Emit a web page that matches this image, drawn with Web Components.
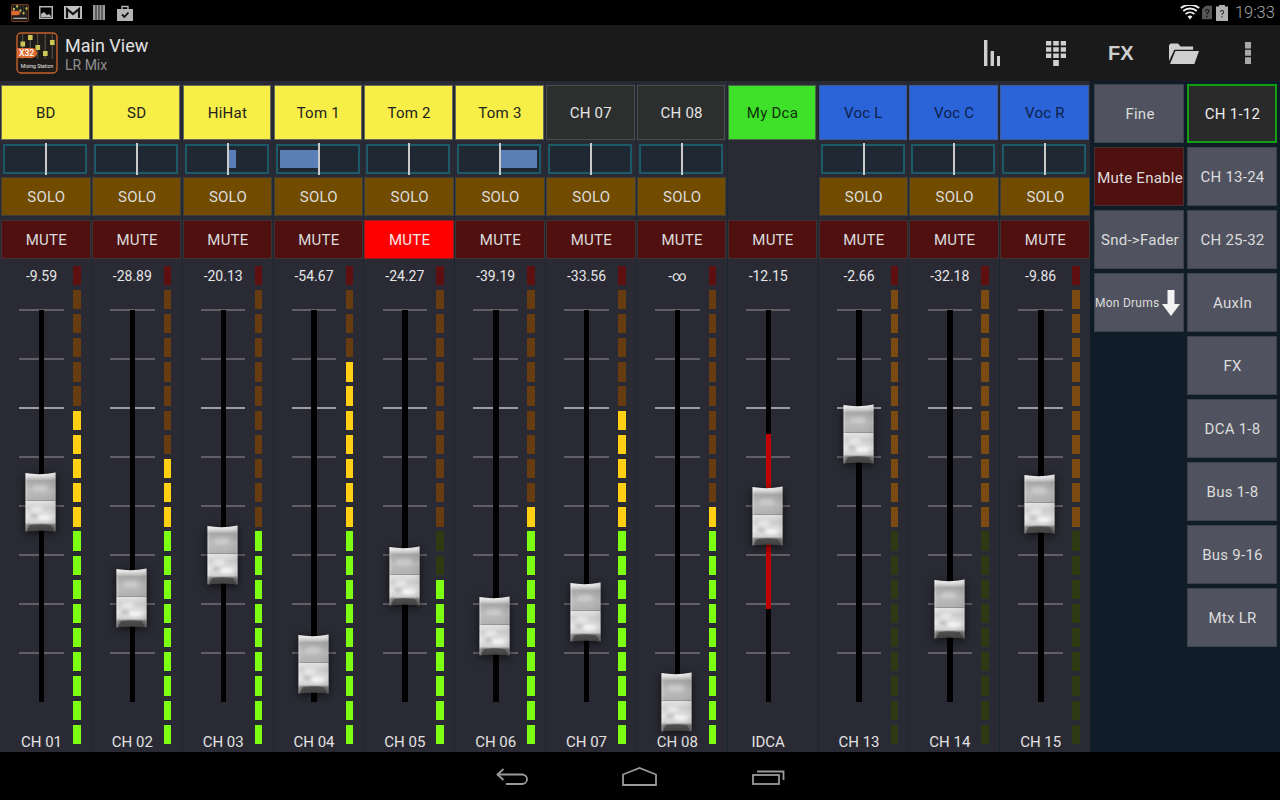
<!DOCTYPE html>
<html lang="en">
<head>
<meta charset="utf-8">
<title>Mixing Station</title>
<style>
html,body{margin:0;padding:0;background:#000;height:800px;overflow:hidden;font-family:Roboto,"Liberation Sans",sans-serif}
</style>
</head>
<body>
<x-app></x-app>
<script>
function def(name, css, html, init){
  customElements.define(name, class extends HTMLElement{
    connectedCallback(){
      if(this.shadowRoot) return;
      const r=this.attachShadow({mode:'open'});
      const h=typeof html==='function'?html(this):html;
      r.innerHTML='<style>'+css+'</style>'+h;
      if(init) init(this,r);
    }
  });
}
const A=(el,k,d)=>el.hasAttribute(k)?el.getAttribute(k):d;

/* logo */
def('x-logo',':host{display:block;line-height:0}svg{display:block;width:100%;height:100%}text{font-family:Roboto,"Liberation Sans",sans-serif}',el=>{
  const mini=el.hasAttribute('mini');
  const knobs=[[4.5,9.5],[12,3],[19.5,13],[27,19],[34,8]];
  return `<svg viewBox="0 0 42 42">
  <rect x="1" y="1" width="40" height="40" rx="4" fill="#1f1b18" stroke="#c4622d" stroke-width="1.4"/>
  ${[6.7,14.2,21.7,29.2,36.2].map(x=>`<rect x="${x-.5}" y="2" width="1" height="25" fill="#5c5a50"/>`).join('')}
  ${knobs.map(k=>`<rect x="${k[0]}" y="${k[1]}" width="4.6" height="5" fill="#cfc755"/>`).join('')}
  <path d="M1 16H16a5 5 0 0 1 0 10H1Z" fill="#dd6a30"/>
  ${mini?'<rect x="5" y="32" width="32" height="3" fill="#aaa"/>':`<text x="3" y="24.2" font-size="8.6" font-weight="500" fill="#fff">X32</text>
  <text x="21" y="36" text-anchor="middle" font-size="5.1" fill="#e8e8e8">Mixing Station</text>`}
  </svg>`;
});

/* status bar */
def('x-status-bar',`:host{display:flex;align-items:center;height:25px;background:#000;flex:none;padding:0 6px 0 11px;box-sizing:border-box}
.l{display:flex;align-items:center;gap:10px;flex:1}
.r{display:flex;align-items:center}
svg{display:block}
x-logo{width:18px;height:18px}
.t{color:#a8a8a8;font:300 16.4px Roboto,sans-serif;margin-left:7px;width:39px;white-space:nowrap}`,
`<div class="l">
<x-logo mini></x-logo>
<svg width="14" height="13" viewBox="0 0 14 13"><rect x=".75" y=".75" width="12.5" height="11.5" fill="none" stroke="#b5b5b5" stroke-width="1.5"/><path d="M2 11V8l3-2 3 3 2-1 2 2v1Z" fill="#b5b5b5"/></svg>
<svg width="18" height="13" viewBox="0 0 18 13" style="margin-left:1px"><rect width="18" height="13" fill="#c0c0c0"/><path d="M3 12V3l6 5 6-5v9" fill="none" stroke="#111" stroke-width="2.2"/></svg>
<svg width="12" height="15" viewBox="0 0 12 15" style="margin-left:1px"><rect width="12" height="15" fill="#9a9a9a"/><path d="M3 0v15M6 0v15M9 0v15" stroke="#222" stroke-width="1"/></svg>
<svg width="16" height="16" viewBox="0 0 16 16" style="margin-left:2px"><path d="M5 4V1.5h6V4" fill="none" stroke="#b5b5b5" stroke-width="1.4"/><rect y="4" width="16" height="12" fill="#b5b5b5"/><path d="M5 9.5l2.4 2.4L11.5 7.5" fill="none" stroke="#111" stroke-width="1.8"/></svg>
</div>
<div class="r">
<svg width="20" height="15" viewBox="0 0 20 15"><path d="M10 14.5L7.6 11.4a4 4 0 0 1 4.8 0Z" fill="#eee"/><path d="M5.6 8.9a7 7 0 0 1 8.8 0M3.2 5.9a11 11 0 0 1 13.6 0M.8 3a15 15 0 0 1 18.4 0" fill="none" stroke="#eee" stroke-width="1.9"/></svg>
<svg width="10" height="15" viewBox="0 0 11 15" style="margin-left:2px"><path d="M4 0h7v15H0V4Z" fill="#565656"/><path d="M3.8 6a1.8 1.8 0 1 1 2.6 1.6c-.8.5-.9.9-.9 1.9M5.5 11v1.6" fill="none" stroke="#111" stroke-width="1.3"/></svg>
<svg width="12" height="16" viewBox="0 0 12 16" style="margin-left:4px"><path d="M3 0h6v1.5h3V16H0V1.5h3Z" fill="#b0b0b0"/><path d="M4.4 7a1.6 1.6 0 1 1 2.4 1.4c-.7.4-.8.8-.8 1.6M6 11v1.4" fill="none" stroke="#333" stroke-width="1.1"/></svg>
<span class="t">19:33</span>
</div>`);

/* action bar */
def('x-action-bar',`:host{display:flex;align-items:center;height:56px;background:#1a1a1a;flex:none;padding-left:16px;box-sizing:border-box;position:relative}
x-logo{width:42px;height:42px;margin-right:7px}
.tt{flex:1;display:flex;flex-direction:column;line-height:1;padding-top:3px}
.a{font:400 18px/20px Roboto,sans-serif;color:#e2e2e2}
.b{font:400 14px/16px Roboto,sans-serif;color:#8f8f8f;margin-top:1px}
.ic{display:flex;align-items:center;color:#cfcfcf;padding-right:29px}
svg{display:block}
.fx{font:700 20px "Liberation Sans",sans-serif;color:#cfcfcf;width:25px;margin-left:42px}`,
`<x-logo></x-logo>
<div class="tt"><div class="a">Main View</div><div class="b">LR Mix</div></div>
<div class="ic">
<svg width="16" height="26" viewBox="0 0 16 26"><path d="M0 0h3.4v26H0ZM6.6 11H10v15H6.6ZM13 16h3v10h-3Z" fill="#cfcfcf"/></svg>
<svg width="20" height="25" viewBox="0 0 20 25" style="margin-left:46px" fill="#cfcfcf"><path d="M0 0h5.3v4.6H0ZM7.2 0h5.6v4.6H7.2ZM14.7 0H20v4.6h-5.3ZM0 6.2h5.3v4.6H0ZM7.2 6.2h5.6v4.6H7.2ZM14.7 6.2H20v4.6h-5.3ZM0 12.4h5.3V17H0ZM7.2 12.4h5.6V17H7.2ZM14.7 12.4H20V17h-5.3ZM7.2 19h5.6v6H7.2Z"/></svg>
<span class="fx">FX</span>
<svg width="30" height="21" viewBox="0 0 30 21" style="margin-left:36px"><path d="M0 20.5V2.2L1.5.5h7.6l2.4 3h12.6v3.2H5.4L0 18Z" fill="#cfcfcf"/><path d="M1 21L6.4 8H30l-4.6 13Z" fill="#cfcfcf"/></svg>
<svg width="6" height="22" viewBox="0 0 6 22" style="margin-left:46px" fill="#a8a8a8"><path d="M0 0h6v6.6H0ZM0 7.8h6v6H0ZM0 15.3h6V22H0Z"/></svg>
</div>`);

/* generic button */
def('x-btn',`:host{display:flex;align-items:center;justify-content:center;box-sizing:border-box;padding-left:1px;border:1px solid var(--bd,#3c424c);background:var(--bg,#50535f);color:var(--fg,#dcdcdc);font:400 var(--fs,15px) Roboto,sans-serif;letter-spacing:.25px;white-space:nowrap;overflow:hidden;text-align:center}`,
`<slot></slot>`);

/* pan */
def('x-pan',`:host{display:block;height:30px;margin:0 3px 0 3px;position:relative;box-sizing:border-box;border:2px solid #1d5a68;background:#1f2833;width:84px}
.bar{position:absolute;top:4px;height:18px;background:#5a7fb6}
.c{position:absolute;left:40px;width:2px;top:-3px;bottom:-3px;background:#cacaca}`,
el=>{
  const p=+A(el,'pan',0);
  const w=Math.abs(p);
  const s=p<0?`left:${40-w}px;width:${w}px`:`left:40px;width:${w}px`;
  return (p?`<div class="bar" style="${s}"></div>`:'')+'<div class="c"></div>';
});

/* meter */
def('x-meter',`:host{display:flex;flex-direction:column;gap:4.86px;width:7.6px;padding-top:6.7px;flex:none}
i{display:block;height:19.3px;flex:none;background:var(--c)}`,
el=>{
  const lit=+A(el,'lit',20), off=el.hasAttribute('off');
  let o='';
  for(let i=0;i<20;i++){
    let c;
    if(i===0) c='#5e1010';
    else if(i<=10) c=i>=lit?'#ffd011':(off?'#7a4a10':'#673c10');
    else c=i>=lit?'#7cff10':'#2e3a12';
    o+=`<i style="--c:${c}"></i>`;
  }
  return o;
});

/* fader */
let capId=0;
def('x-fader',`:host{display:block;width:44.4px;height:392px;position:relative;flex:none}
.ticks{display:flex;flex-direction:column;margin-top:-1px}
.tk{height:49px;flex:none;box-sizing:border-box;border-top:2px solid #5f5f65}
.tk.h{border-top-color:#9c9ca0}
.track{position:absolute;left:19.7px;top:0;bottom:0;width:5.4px;background:#000}
.dca{position:absolute;left:0;right:0;background:#c00000}
svg{position:absolute;left:5.9px;width:31px;height:60px;filter:drop-shadow(0 2px 5px rgba(0,0,0,.65))}`,
el=>{
  const id='c'+(++capId);
  const top=+A(el,'cap',0)-1;
  const dca=el.hasAttribute('dca-top')?`<div class="dca" style="top:${A(el,'dca-top')}px;height:${A(el,'dca-h')}px"></div>`:'';
  let t='';
  for(let i=0;i<8;i++) t+=`<div class="tk${i===2?' h':''}"></div>`;
  const shape='M.5 1Q15.5 3.5 30.5 .5L30.5 59.5Q15.5 57.5 .5 59.5Z';
  return `<div class="ticks">${t}</div><div class="track">${dca}</div>
  <svg style="top:${top}px" viewBox="0 0 31 60">
  <defs>
    <linearGradient id="${id}a" x1="0" y1="0" x2="0" y2="1">
      <stop offset="0" stop-color="#f0f0f0"/><stop offset=".06" stop-color="#e0e0e0"/><stop offset=".14" stop-color="#a6a6a6"/><stop offset=".3" stop-color="#bcbcbc"/><stop offset=".46" stop-color="#b0b0b0"/>
      <stop offset=".47" stop-color="#7c7c7c"/><stop offset=".49" stop-color="#e2e2e2"/><stop offset=".6" stop-color="#cfcfcf"/><stop offset=".74" stop-color="#e4e4e4"/><stop offset=".85" stop-color="#cfcfcf"/><stop offset=".89" stop-color="#7a7a7a"/><stop offset="1" stop-color="#484848"/>
    </linearGradient>
    <linearGradient id="${id}b" x1="0" y1="0" x2="1" y2="0">
      <stop offset="0" stop-color="#fff" stop-opacity=".4"/><stop offset=".08" stop-color="#fff" stop-opacity=".03"/><stop offset=".5" stop-color="#fff" stop-opacity="0"/><stop offset=".92" stop-color="#000" stop-opacity=".05"/><stop offset="1" stop-color="#fff" stop-opacity=".25"/>
    </linearGradient>
    <filter id="${id}f" x="-30%" y="-30%" width="160%" height="160%"><feGaussianBlur stdDeviation="1.8"/></filter>
    <clipPath id="${id}p"><rect x="1" y="3" width="29" height="48"/></clipPath>
  </defs>
  <path d="${shape}" fill="url(#${id}a)"/>
  <g clip-path="url(#${id}p)">
    <ellipse cx="12" cy="37" rx="6" ry="3" fill="#fff" opacity=".45" filter="url(#${id}f)"/>
    <ellipse cx="20" cy="46" rx="7" ry="2.6" fill="#fff" opacity=".7" filter="url(#${id}f)"/>
    <ellipse cx="9" cy="44" rx="4" ry="2" fill="#999" opacity=".5" filter="url(#${id}f)"/>
    <ellipse cx="15" cy="16" rx="8" ry="3.6" fill="#ddd" opacity=".45" filter="url(#${id}f)"/>
  </g>
  <path d="${shape}" fill="url(#${id}b)"/>
  <path d="M5 53Q15.5 51.5 26 53L29 59.2Q15.5 57.5 2 59.2Z" fill="#3c3c3c" opacity=".7"/>
  </svg>`;
});

/* strip */
def('x-strip',`:host{display:flex;flex-direction:column;height:671px;box-sizing:border-box;padding-top:4px;min-width:0;
  background:linear-gradient(#1b2832,#1b2832) left top/1px 100% no-repeat,#2a2a34}
:host(:first-child){background:#2a2a34}
.btns{display:flex;flex-direction:column;height:174px;padding-left:1px;flex:none}
.nm{height:55px;width:88.6px}
x-btn.s{height:39px;width:89.6px;margin-top:3px;--bg:#704b00;--bd:#3e3e3c;--fg:#dcdcdc}
x-btn.m{height:39px;width:89.6px;margin-top:4px;--bg:#501010;--bd:#3e3234;--fg:#dcdcdc}
x-btn.m.on{--bg:#ff0000;--fg:#f0e8e8;--bd:#8a2020}
x-pan{margin-top:4px;margin-left:2px}
.sp{height:76px;flex:none}
.low{display:flex;flex:1;min-height:0}
.col{width:63px;margin-left:10px;flex:none;display:flex;flex-direction:column;align-items:center;position:relative}
.v{height:51px;flex:none;box-sizing:border-box;padding-top:7px;font:400 14px/20px Roboto,sans-serif;color:#e6e6e6;white-space:nowrap}
.lb{flex:none;margin-top:30px;font:400 15px/20px Roboto,sans-serif;color:#e2e2e2;white-space:nowrap}`,
el=>{
  const dca=el.hasAttribute('dca');
  const on=el.hasAttribute('muted');
  const style=`--bg:${A(el,'bg','#2c2f2e')};--fg:${A(el,'fg','#e4e4e4')};--bd:${A(el,'bd','#4a4d4c')}`;
  return `<div class="btns">
  <x-btn class="nm" style="${style}">${A(el,'name','')}</x-btn>
  ${dca?'<div class="sp"></div>':`<x-pan pan="${A(el,'pan',0)}"></x-pan><x-btn class="s">SOLO</x-btn>`}
  <x-btn class="m${on?' on':''}">MUTE</x-btn></div>
  <div class="low">
    <div class="col"><div class="v">${A(el,'value','')}</div>
      <x-fader cap="${A(el,'cap',0)}" ${dca?'dca-top="124" dca-h="175"':''}></x-fader>
      <div class="lb">${A(el,'label','')}</div></div>
    ${dca?'':`<x-meter lit="${A(el,'lit',20)}" ${el.hasAttribute('off')?'off':''}></x-meter>`}
  </div>`;
});

/* side panel */
def('x-side',`:host{display:grid;grid-template-columns:89.5px 90px;grid-auto-rows:59px;row-gap:4px;column-gap:3.5px;width:190px;box-sizing:border-box;padding:3px 0 0 4px;background:#101c28;height:671px;align-content:start}
x-btn.act{--bg:#2a2a2a;--bd:#12a012;border-width:2px;--fg:#eee}
.pl{padding-left:2.5px}
.row{display:flex;align-items:center;font:400 12px Roboto,sans-serif;width:100%}
.row svg{display:block;margin-left:3px}`,
`<x-btn class="pl" style="grid-column:1;grid-row:1">Fine</x-btn>
<x-btn class="pl" style="grid-column:1;grid-row:2;--bg:#501010;--bd:#3e3234;padding-top:2px">Mute Enable</x-btn>
<x-btn class="pl" style="grid-column:1;grid-row:3">Snd-&gt;Fader</x-btn>
<x-btn style="grid-column:1;grid-row:4;padding-left:0"><div class="row"><span>Mon Drums</span><svg width="18" height="26" viewBox="0 0 18 26"><path d="M5.5 0h7v14H18L9 26 0 14h5.5Z" fill="#f2f2f2"/></svg></div></x-btn>
<x-btn class="act" style="grid-column:2;grid-row:1">CH 1-12</x-btn>
<x-btn style="grid-column:2;grid-row:2">CH 13-24</x-btn>
<x-btn style="grid-column:2;grid-row:3">CH 25-32</x-btn>
<x-btn style="grid-column:2;grid-row:4">AuxIn</x-btn>
<x-btn style="grid-column:2;grid-row:5">FX</x-btn>
<x-btn style="grid-column:2;grid-row:6">DCA 1-8</x-btn>
<x-btn style="grid-column:2;grid-row:7">Bus 1-8</x-btn>
<x-btn style="grid-column:2;grid-row:8">Bus 9-16</x-btn>
<x-btn style="grid-column:2;grid-row:9">Mtx LR</x-btn>`);

/* nav bar */
def('x-nav',`:host{display:flex;align-items:center;justify-content:center;height:48px;background:#000;flex:none;padding-left:2px;box-sizing:border-box}
svg{display:block;margin-top:1px}
.h{margin-left:94px}.r{margin-left:95px}`,
`<svg width="32" height="17" viewBox="0 0 32 17" fill="none" stroke="#9a9a9a" stroke-width="1.8"><path d="M1.5 6.5H26a5 4.75 0 0 1 0 9.5H10"/><path d="M7.5 1L1.5 6.5l6 5.5"/></svg>
<svg class="h" width="35" height="19" viewBox="0 0 35 19" fill="none" stroke="#9a9a9a" stroke-width="1.8"><path d="M1 18V7.5L17.5 1 34 7.5V18Z"/></svg>
<svg class="r" width="34" height="17" viewBox="0 0 34 17" fill="none" stroke="#9a9a9a" stroke-width="1.8"><rect x="1" y="7" width="26" height="9"/><path d="M5 3.5h26.5V12"/></svg>`);

/* app */
const STRIPS=[
 {name:'BD',t:'y',pan:0,value:'-9.59',label:'CH 01',lit:6,cap:163},
 {name:'SD',t:'y',pan:0,value:'-28.89',label:'CH 02',lit:8,cap:259},
 {name:'HiHat',t:'y',pan:9,value:'-20.13',label:'CH 03',lit:11,cap:216},
 {name:'Tom 1',t:'y',pan:-38,value:'-54.67',label:'CH 04',lit:4,cap:324.5},
 {name:'Tom 2',t:'y',pan:0,value:'-24.27',label:'CH 05',lit:13,cap:237,muted:1},
 {name:'Tom 3',t:'y',pan:38,value:'-39.19',label:'CH 06',lit:10,cap:287},
 {name:'CH 07',t:'d',pan:0,value:'-33.56',label:'CH 07',lit:6,cap:273},
 {name:'CH 08',t:'d',pan:0,value:'-∞',label:'CH 08',lit:10,cap:362.5},
 {name:'My Dca',t:'g',value:'-12.15',label:'IDCA',cap:177,dca:1},
 {name:'Voc L',t:'b',pan:0,value:'-2.66',label:'CH 13',lit:20,off:1,cap:95},
 {name:'Voc C',t:'b',pan:0,value:'-32.18',label:'CH 14',lit:20,off:1,cap:270},
 {name:'Voc R',t:'b',pan:0,value:'-9.86',label:'CH 15',lit:20,off:1,cap:165}
];
const THEME={y:['#f7ee47','#222','#6c6c5a'],d:['#2c2f2e','#e6e6e6','#4b4e4d'],g:['#3ee02a','#10300a','#4a6a44'],b:['#2a64d8','#0e1f4a','#3e5a90']};
def('x-app',`:host{display:flex;flex-direction:column;width:1280px;height:800px;background:#000}
main{display:flex;height:671px;flex:none}
.strips{display:grid;grid-template-columns:repeat(12,1fr);width:1090px;flex:none}`,
()=>`<x-status-bar></x-status-bar><x-action-bar></x-action-bar>
<main><div class="strips">${STRIPS.map(s=>{
  const th=THEME[s.t];
  return `<x-strip name="${s.name}" bg="${th[0]}" fg="${th[1]}" bd="${th[2]}" pan="${s.pan||0}" value="${s.value}" label="${s.label}" lit="${s.lit==null?20:s.lit}" cap="${s.cap}"${s.muted?' muted':''}${s.dca?' dca':''}${s.off?' off':''}></x-strip>`;
}).join('')}</div><x-side></x-side></main><x-nav></x-nav>`);
</script>
</body>
</html>
